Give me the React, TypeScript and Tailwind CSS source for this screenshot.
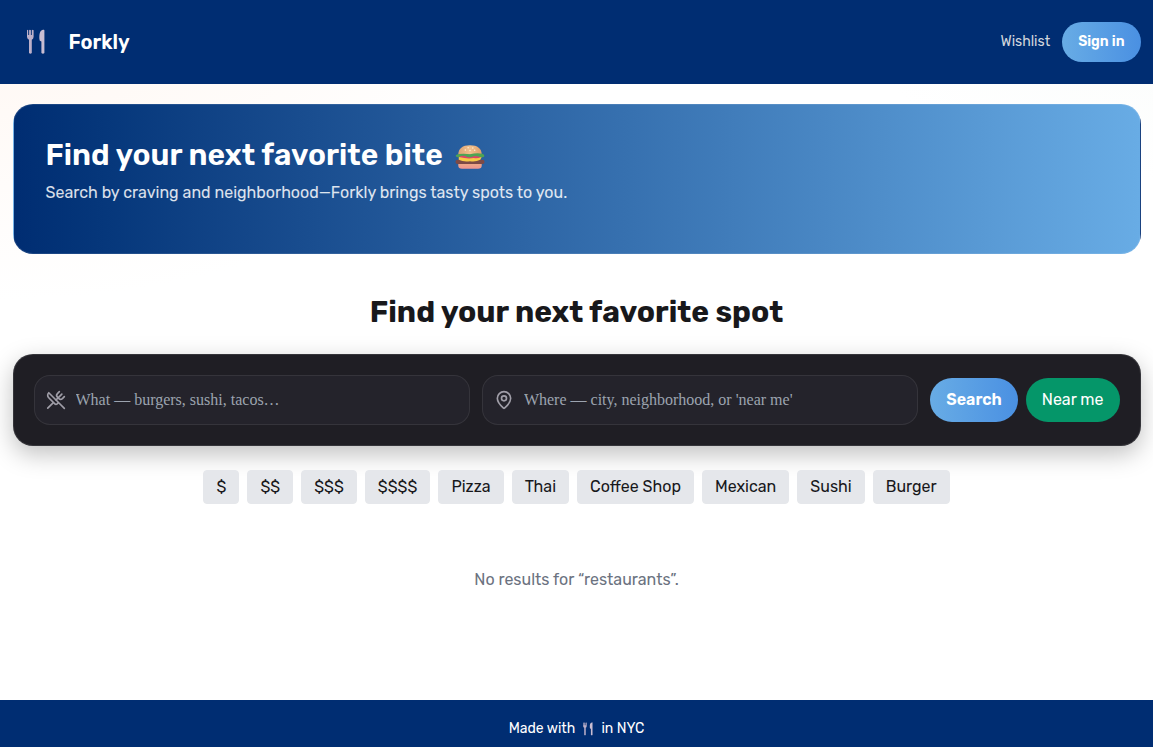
import { MapPin, UtensilsCrossed } from "lucide-react";

const filters = ["$", "$$", "$$$", "$$$$", "Pizza", "Thai", "Coffee Shop", "Mexican", "Sushi", "Burger"];

function Cutlery({ className }: { className: string }) {
  return (
    <svg viewBox="0 0 20 26" className={className} fill="#c9bdd2" aria-hidden="true">
      <path d="M1 1.2Q1.4 .3 2.2 1.2V6H3.1V1.2Q3.8 .3 4.9 1.2V6H5.8V1.2Q6.6 .3 7.6 1.2V8Q7.4 10 5.8 10.8V24Q4.4 25.6 3 24V10.8Q1.3 10 1 8Z" fill="#bdb0c9" />
      <path d="M17.2 .8Q18.4 .4 18.4 1.4V24Q17 25.6 15.4 24V12.4Q13.2 12.2 13.4 10C13.2 5 13.8 1.2 17.2 .8Z" />
    </svg>
  );
}

function Burger() {
  return (
    <svg viewBox="0 0 32 26" className="mt-1 h-[26px] w-[30px]" aria-hidden="true">
      <defs>
        <linearGradient id="bun" x1="0" x2="1">
          <stop stopColor="#dba274" />
          <stop offset=".5" stopColor="#f2c08c" />
          <stop offset="1" stopColor="#dfa06b" />
        </linearGradient>
        <linearGradient id="base" x1="0" y1="0" x2="0" y2="1">
          <stop stopColor="#edb083" />
          <stop offset="1" stopColor="#ee9491" />
        </linearGradient>
      </defs>
      <path d="M3.5 18H28.5V22Q28.5 25.5 24.5 25.5H7.5Q3.5 25.5 3.5 22Z" fill="url(#base)" />
      <rect x="0.5" y="16" width="31" height="4.5" rx="2.2" fill="#7d4a46" />
      <path d="M4 12H29L27 16Q22 18.5 16 17.5Q9 18.5 4 16Z" fill="#f7ca45" />
      <path d="M4 11H28V13Q24 15 20 14Q15 15 10 14L4 13Z" fill="#dc4668" />
      <path d="M3.5 10.5C3.5 4 8 .5 16 .5S28.5 4 28.5 10.5Z" fill="url(#bun)" />
      <path d="M1 12.5Q0 10.5 4 9.8Q10 9 16 10Q23 8.5 29 9.5Q32 10.5 31 12.8Q28 14 25 12.5Q21 11 18 13Q14 14 11 12Q7 11 5 12.8Q3 13.8 1 12.5Z" fill="#4fa453" />
      <g fill="#fff0d2">
        <circle cx="11" cy="5.5" r=".8" />
        <circle cx="14" cy="3.2" r=".8" />
        <circle cx="16" cy="6" r=".8" />
        <circle cx="19" cy="3.3" r=".8" />
        <circle cx="21" cy="5.8" r=".8" />
      </g>
    </svg>
  );
}

export default function App() {
  return (
    <div className="flex min-h-screen flex-col bg-white bg-[radial-gradient(700px_400px_at_0%_0%,#fff7f2,transparent_75%),radial-gradient(500px_300px_at_100%_0%,#fafcfb,transparent_60%)] font-[Rubik,Inter,sans-serif] text-[#18181b]">
      <header className="bg-[#002d72]">
        <div className="mx-auto flex h-21 max-w-6xl items-center justify-between px-3">
          <a href="#home" className="flex items-center gap-2.5 text-xl font-semibold text-white">
            <span className="flex size-[46px] items-center justify-center">
              <Cutlery className="h-[26px] w-5" />
            </span>
            Forkly
          </a>
          <nav className="flex items-center gap-3 text-sm">
            <a href="#wishlist" className="text-gray-300">Wishlist</a>
            <button className="h-10 rounded-full bg-linear-to-r from-[#68ace5] to-[#4a90e2] px-4 font-semibold text-white">Sign in</button>
          </nav>
        </div>
      </header>

      <main className="mx-auto w-full max-w-6xl flex-1 px-3 pt-5">
        <section className="h-[150px] rounded-[20px] border border-white/10 bg-linear-to-r from-[#002d72] to-[#68ace5] px-8 pt-8 text-white">
          <h1 className="flex items-center gap-3 text-3xl font-semibold">
            Find your next favorite bite <Burger />
          </h1>
          <p className="mt-2 text-white/85">Search by craving and neighborhood—Forkly brings tasty spots to you.</p>
        </section>

        <h2 className="mt-10 text-center text-3xl font-bold">Find your next favorite spot</h2>

        <form
          onSubmit={(e) => e.preventDefault()}
          className="mt-6 flex items-center gap-3 rounded-[20px] border border-white/10 bg-[#1f1e24] p-5 shadow-[0_8px_24px_rgba(0,0,0,0.25)]"
        >
          <label className="flex h-[50px] min-w-0 flex-1 items-center gap-2.5 rounded-2xl border border-white/8 bg-[#24232b] px-[11px] text-[#a09ea8]">
            <UtensilsCrossed size={20} className="shrink-0" aria-label="What" />
            <input className="w-full min-w-0 font-['Liberation_Serif',serif] text-base text-white outline-none placeholder:text-[#9ca3af]" placeholder="What — burgers, sushi, tacos…" />
          </label>
          <label className="flex h-[50px] min-w-0 flex-1 items-center gap-2.5 rounded-2xl border border-white/8 bg-[#24232b] px-[11px] text-[#a09ea8]">
            <MapPin size={20} className="shrink-0" aria-label="Where" />
            <input className="w-full min-w-0 font-['Liberation_Serif',serif] text-base text-white outline-none placeholder:text-[#9ca3af]" placeholder="Where — city, neighborhood, or 'near me'" />
          </label>
          <div className="flex gap-2">
            <button type="submit" className="h-11 rounded-full bg-linear-to-r from-[#68ace5] to-[#4a90e2] px-4 font-semibold text-white">Search</button>
            <button type="button" className="h-11 rounded-full bg-[#059669] px-4 text-white">Near me</button>
          </div>
        </form>

        <div className="mt-6 flex flex-wrap justify-center gap-2">
          {filters.map((name) => (
            <button key={name} className="h-[34px] rounded border border-gray-200 bg-gray-200 px-3">{name}</button>
          ))}
        </div>

        <p className="mt-16 text-center text-[#6b7280]">No results for “restaurants”.</p>
      </main>

      <footer className="flex items-center justify-center gap-1.5 bg-[#002d72] pt-[19px] pb-2 text-sm text-white">
        Made with <Cutlery className="h-3.5 w-3.5" /> in NYC
      </footer>
    </div>
  );
}
